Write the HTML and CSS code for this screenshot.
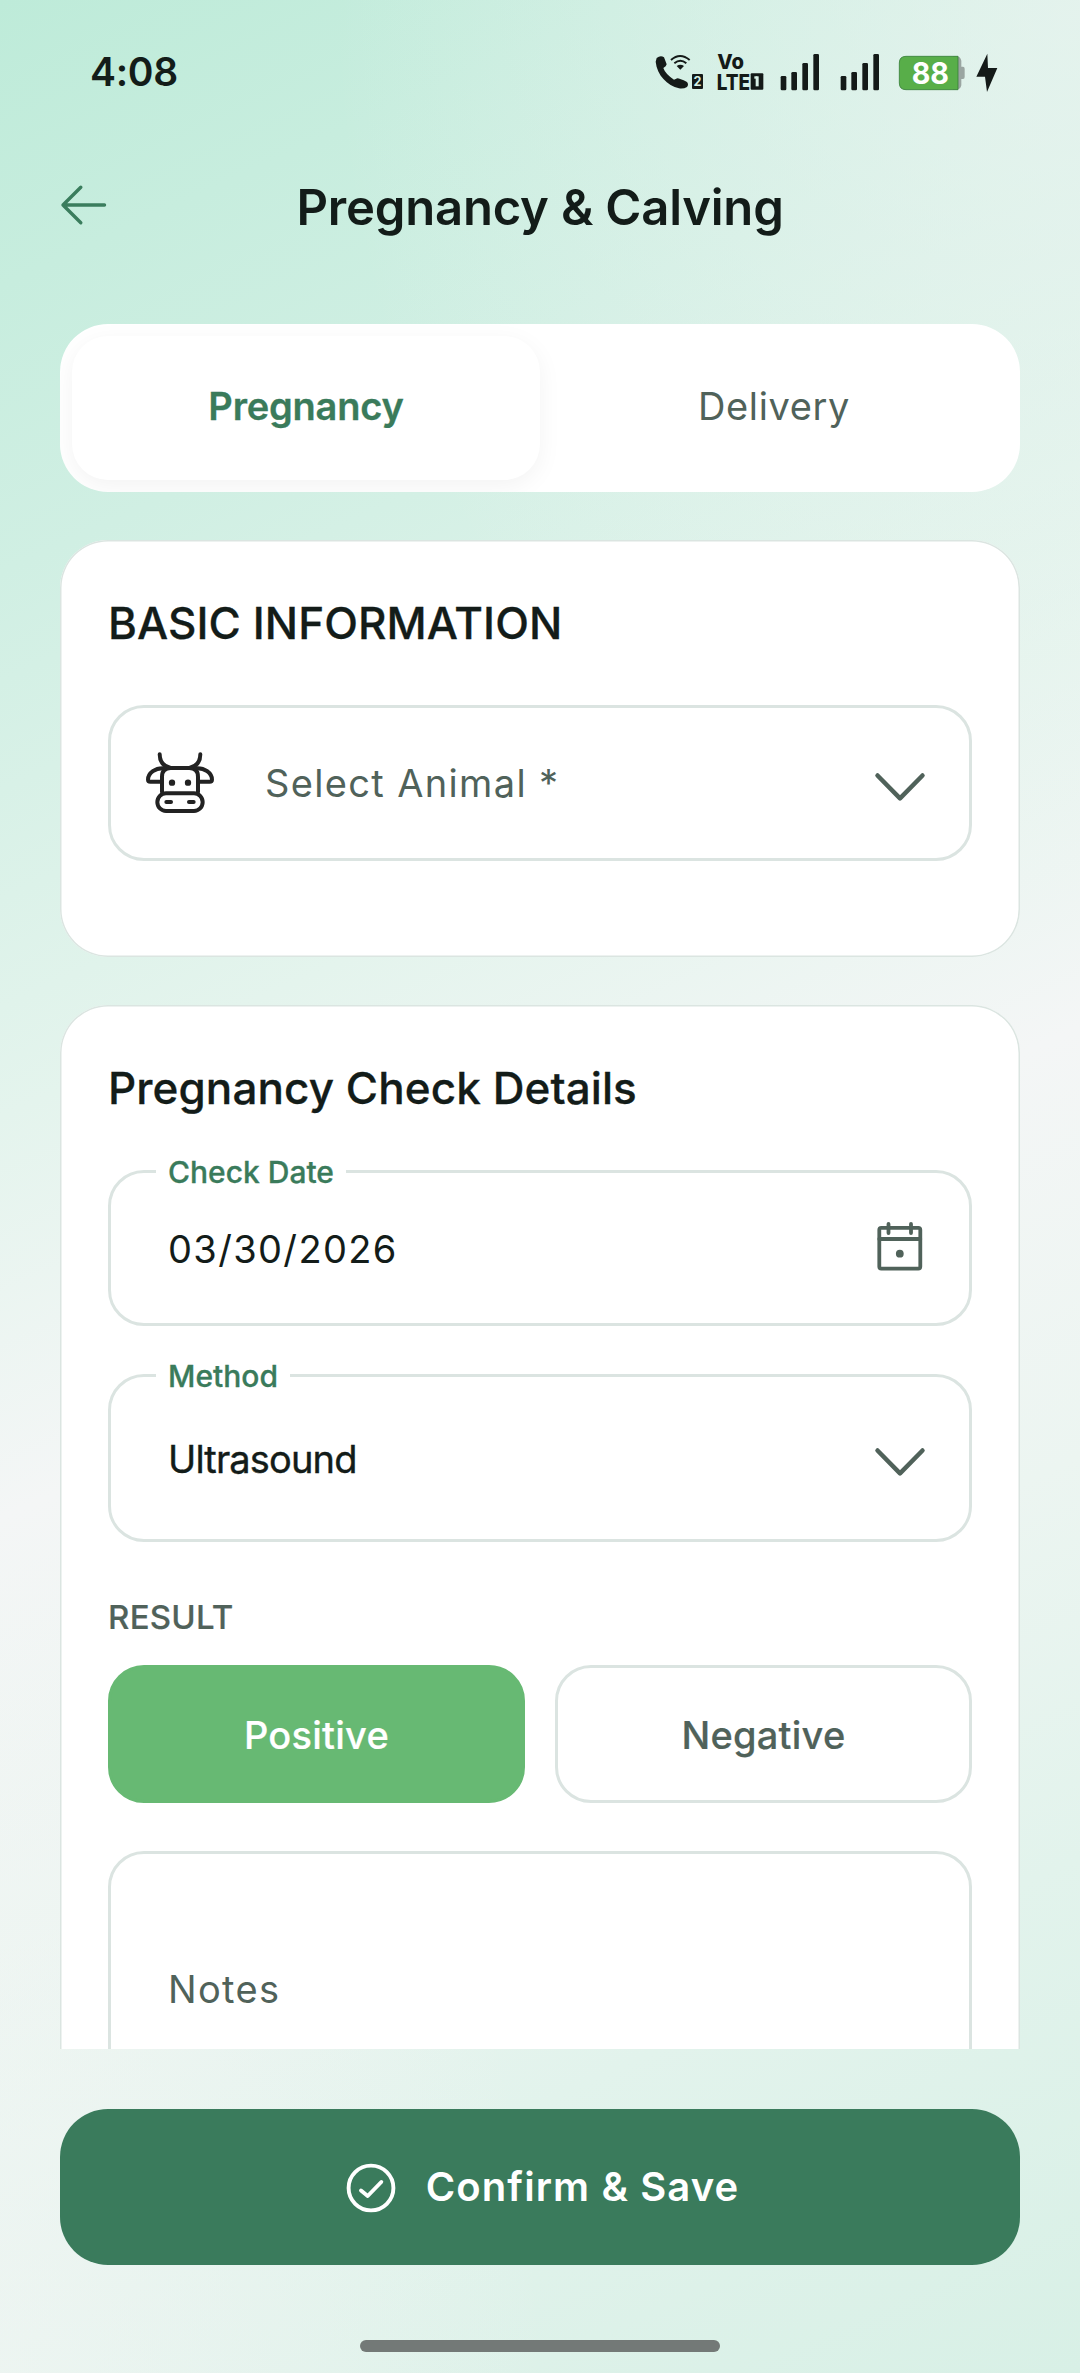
FILE: index.html
```html
<!DOCTYPE html>
<html lang="en">
<head>
<meta charset="utf-8">
<title>Pregnancy &amp; Calving</title>
<link rel="stylesheet" href="styles.css">
</head>
<body>
<div class="screen">
  <div class="status">
    <span class="clock">4:08</span>
    <div class="status-icons">
      <svg class="s-call" viewBox="45 0 147 195">
        <path d="M50 54Q62 44 72 52L80 73Q79 79 70 84Q76 102 102 119L112 115Q119 115 141 126Q147 133 141 141Q131 147 117 145C82 136 51 106 47 65Z" fill="#141a18"/>
        <path d="M93 60Q120 36 149 60M103 70Q121 55 139 70" fill="none" stroke="#141a18" stroke-width="6"/>
        <path d="M110 78Q121 70 132 78L121 89Z" fill="#141a18"/>
        <rect x="156" y="102" width="33" height="45" rx="3" fill="#141a18"/>
        <text x="172.500" y="138" text-anchor="middle" font-size="38" font-weight="700" fill="#d6f0e5">2</text>
      </svg>
      <svg class="s-volte" viewBox="231 0 141 195">
        <text x="232" y="88" font-size="62" font-weight="800" textLength="80" lengthAdjust="spacingAndGlyphs" fill="#141a18">Vo</text>
        <text x="230" y="149" font-size="64" font-weight="800" textLength="100" lengthAdjust="spacingAndGlyphs" fill="#141a18">LTE</text>
        <rect x="332" y="100" width="38" height="49" rx="3" fill="#141a18"/>
        <rect x="347" y="109" width="9" height="30" fill="#d9f0e6"/>
        <rect x="343" y="109" width="9" height="7" fill="#d9f0e6"/>
      </svg>
      <svg class="s-signal" viewBox="420 0 120 195" fill="#141a18">
        <rect x="422" y="108" width="17" height="43" rx="4"/><rect x="454" y="96" width="17" height="55" rx="4"/><rect x="487" y="69" width="17" height="82" rx="4"/><rect x="520" y="42" width="17" height="109" rx="4"/>
      </svg>
      <svg class="s-signal second" viewBox="420 0 120 195" fill="#141a18">
        <rect x="422" y="108" width="17" height="43" rx="4"/><rect x="454" y="96" width="17" height="55" rx="4"/><rect x="487" y="69" width="17" height="82" rx="4"/><rect x="520" y="42" width="17" height="109" rx="4"/>
      </svg>
      <svg class="s-battery" viewBox="775 0 201 195">
        <path d="M940 49H950Q962 49 965 62V80H970Q975 80 975 86V111Q975 117 970 117H965V136Q962 149 950 149H940Z" fill="#9aa5a1"/>
        <path d="M799 49H955V149H799Q779 149 779 129V69Q779 49 799 49Z" fill="#58ae49" stroke="#37803a" stroke-width="2.500"/>
        <text x="872" y="133" text-anchor="middle" font-size="91" font-weight="700" textLength="112" lengthAdjust="spacingAndGlyphs" fill="#fff">88</text>
      </svg>
      <svg class="s-bolt" viewBox="1009 0 66 195"><path d="M1043 41L1010 110H1036L1042 156L1073 84H1045Z" fill="#141a18"/></svg>
    </div>
  </div>

  <header class="header">
    <svg class="back" viewBox="0 0 48 42" fill="none" stroke="#3a7d5d" stroke-width="3.400" stroke-linecap="round" stroke-linejoin="round"><path d="M20.800 3.300L3 21L20.800 38.700M3 21H44.500"/></svg>
    <h1>Pregnancy &amp; Calving</h1>
  </header>

  <main class="content">
    <nav class="tabs">
      <div class="tab active">Pregnancy</div>
      <div class="tab">Delivery</div>
    </nav>

    <section class="card">
      <h2>BASIC INFORMATION</h2>
      <div class="field select-animal">
        <svg class="cow" viewBox="165 515 210 190" fill="none" stroke="#222" stroke-width="12" stroke-linecap="round" stroke-linejoin="round">
          <path d="M216 638V592Q216 566 242 566H298Q324 566 324 592V638"/>
          <path d="M209 525C209 545 220 561 242 566M331 525C331 545 320 561 298 566"/>
          <path d="M224 567C196 564 174 582 174 601Q174 607 181 607H214M316 567C344 564 366 582 366 601Q366 607 359 607H326"/>
          <rect x="202" y="642" width="136" height="53" rx="26"/>
          <path d="M229 668H243M297 668H311"/>
          <g fill="#222" stroke="none"><circle cx="246" cy="610" r="9.500"/><circle cx="294" cy="610" r="9.500"/></g>
        </svg>
        <span class="placeholder">Select Animal *</span>
        <svg class="chevron" viewBox="0 0 50 28"><path d="M2.500 2.500L25 25.300L47.500 2.500"/></svg>
      </div>
    </section>

    <section class="card details">
      <h2>Pregnancy Check Details</h2>
      <div class="field">
        <label>Check Date</label>
        <span class="date">03/30/2026</span>
        <svg class="calendar" viewBox="0 0 50 50" fill="none" stroke="#50625a" stroke-width="3.800" stroke-linecap="round">
          <rect x="4.300" y="6.800" width="41" height="40.800" rx="2"/><path d="M4.300 18H45.300M13.500 3V12M36 3V12"/><circle cx="24.800" cy="32.700" r="3.900" fill="#50625a" stroke="none"/>
        </svg>
      </div>
      <div class="field method">
        <label>Method</label>
        <span class="value">Ultrasound</span>
        <svg class="chevron" viewBox="0 0 50 28"><path d="M2.500 2.500L25 25.300L47.500 2.500"/></svg>
      </div>
      <h3>RESULT</h3>
      <div class="results">
        <div class="choice positive">Positive</div>
        <div class="choice">Negative</div>
      </div>
      <div class="field notes"><span class="placeholder">Notes</span></div>
    </section>
  </main>

  <footer class="footer">
    <div class="confirm">
      <svg viewBox="0 0 50 50" fill="none" stroke="#fff" stroke-width="3.900" stroke-linecap="round" stroke-linejoin="round"><circle cx="25" cy="25" r="22.400"/><path d="M15 27.500L21.700 33L35.300 19"/></svg>
      <span>Confirm &amp; Save</span>
    </div>
    <div class="home-bar"></div>
  </footer>
</div>
</body>
</html>
```
FILE: styles.css
```css
* { box-sizing: border-box; margin: 0; }
body { font-family: "Inter", "Liberation Sans", sans-serif; color: #131c19; }
svg { display: block; flex: none; overflow: visible; }

.screen {
  width: 1080px;
  height: 2373px;
  overflow: hidden;
  display: flex;
  flex-direction: column;
  background:
    radial-gradient(750px 950px at 100% 0, rgba(240, 245, 243, .65), rgba(240, 245, 243, 0)),
    radial-gradient(550px 900px at 0 100%, rgba(244, 246, 245, .6), rgba(244, 246, 245, 0)),
    linear-gradient(155.530deg, #beebd9 0%, #d0efe3 20%, #e4f4ed 39%, #f4f6f6 53%, #ecf5f1 68%, #e2f3ec 82%, #d8f0e6 100%);
}

.status { height: 105px; padding: 40px 82px 0 90px; display: flex; justify-content: space-between; }
.clock { font-size: 39px; font-weight: 600; letter-spacing: -.280px; line-height: 63px; }
.status-icons { display: flex; height: 65px; }
.status-icons svg { height: 65px; }
.s-call { width: 49px; }
.s-volte { width: 47px; margin-left: 13px; }
.s-signal { width: 40px; margin-left: 16px; }
.s-signal.second { margin-left: 20px; }
.s-battery { width: 67px; margin-left: 18px; }
.s-bolt { width: 22px; margin-left: 11px; }

.header {
  height: 204px;
  margin-bottom: 15px;
  padding: 0 60px;
  display: grid;
  grid-template-columns: 48px 1fr 48px;
  align-items: center;
}
.back { width: 48px; height: 42px; margin-bottom: 5px; }
h1 { font-size: 49px; font-weight: 600; letter-spacing: -.200px; text-align: center; line-height: 60px; padding-top: 2px; }

.content { height: 1725px; padding: 0 60px; display: flex; flex-direction: column; gap: 48px; overflow: hidden; }
.tabs { flex: none; height: 168px; padding: 12px; display: flex; background: #fff; border-radius: 48px; overflow: hidden; }
.tab { flex: 1; line-height: 141px; text-align: center; font-size: 38px; letter-spacing: .600px; color: #50625a; border-radius: 36px; }
.tab.active { background: #fff; color: #3a7b5b; font-weight: 600; letter-spacing: -.200px; -webkit-text-stroke: .300px; box-shadow: 0 6px 24px rgba(0, 0, 0, .050); }

.card { flex: none; height: 417px; padding: 48px; background: #fff; border-radius: 48px; box-shadow: inset 0 0 0 1.500px #dbe5e1; }
.card.details { height: 1200px; }
h2 { font-size: 44px; font-weight: 500; letter-spacing: .080px; line-height: 71px; margin-bottom: 46px; -webkit-text-stroke: .300px; }

.field { position: relative; height: 156px; padding: 0 44px 0 57px; border: 3px solid #dbe4e1; border-radius: 36px; display: flex; align-items: center; justify-content: space-between; font-size: 38px; }
.field label { position: absolute; left: 45px; top: -22px; padding: 0 12px; background: #fff; color: #3a7b5b; font-size: 30px; font-weight: 500; line-height: 42px; -webkit-text-stroke: .300px; }
.placeholder { color: #50625a; letter-spacing: 1.350px; }
.select-animal { padding-left: 34px; }
.cow { width: 70px; height: 63.300px; }
.select-animal .placeholder { flex: 1; margin-left: 50px; }
.chevron { width: 50px; height: 28px; margin-top: 7px; fill: none; stroke: #50625a; stroke-width: 4.500; stroke-linecap: round; stroke-linejoin: round; }
.date { letter-spacing: 1.350px; padding-top: 2px; }
.calendar { width: 50px; height: 50px; margin-bottom: 4px; }
.method { height: 168px; margin-top: 48px; }
.method .chevron { margin-top: 8px; }
.value { letter-spacing: -.850px; padding-top: 2px; -webkit-text-stroke: .400px; }

h3 { margin: 48px 0 21px; font-size: 33px; font-weight: 500; letter-spacing: .250px; line-height: 54px; color: #50625a; -webkit-text-stroke: .200px; }
.results { display: flex; gap: 30px; }
.choice { flex: 1; height: 138px; border: 3px solid #dbe4e1; border-radius: 36px; text-align: center; font-size: 38px; font-weight: 500; letter-spacing: .250px; line-height: 135px; color: #50625a; -webkit-text-stroke: .200px; }
.choice.positive { background: #67b973; border-color: #67b973; color: #fff; }
.notes { height: 276px; margin-top: 48px; }

.footer { padding: 60px 60px 0; display: flex; flex-direction: column; align-items: center; }
.confirm { width: 100%; height: 156px; padding: 0 0 1px 5px; display: flex; align-items: center; justify-content: center; gap: 30px; background: #3a7b5c; border-radius: 48px; color: #fff; font-size: 40px; font-weight: 600; letter-spacing: 1.100px; }
.confirm svg { width: 50px; height: 50px; margin-top: 2px; }
.home-bar { width: 360px; height: 12px; margin-top: 75px; border-radius: 6px; background: #737977; }
```
